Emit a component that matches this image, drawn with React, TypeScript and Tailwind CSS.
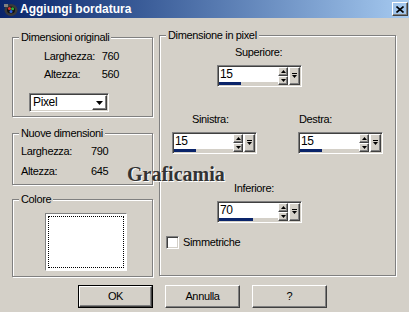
import * as React from "react";

const raised =
  "border border-t-white border-l-white border-r-[#404040] border-b-[#404040] shadow-[inset_-1px_-1px_0_#808080]";
const sunken =
  "border border-t-[#808080] border-l-[#808080] border-r-white border-b-white shadow-[inset_1px_1px_0_#404040,inset_-1px_-1px_0_#d4d0c8] p-[1px]";
const etched =
  "relative border border-[#808080] shadow-[inset_1px_1px_0_#fff,1px_1px_0_#fff]";

const Group: React.FC<
  React.PropsWithChildren & { title: string; className?: string }
> = ({ title, className, children }) => (
  <div className={`${etched} ${className ?? ""}`}>
    <span className="absolute left-[6px] top-[-7px] px-[2px] bg-[#d4d0c8] leading-[13px]">
      {title}
    </span>
    {children}
  </div>
);

const Arrow: React.FC<{ up?: boolean }> = ({ up }) => (
  <svg width="5" height="3" viewBox="0 0 5 3" className="block">
    <polygon points={up ? "2.5,0 5,3 0,3" : "0,0 5,0 2.5,3"} fill="#000" />
  </svg>
);

const Spin: React.FC<{ value: string; fill: number }> = ({ value, fill }) => (
  <div className={`${sunken} w-[85px] h-[22px] flex`}>
    <div className="w-[59px] flex flex-col bg-white">
      <div className="h-[15px] pl-[1px] text-[12px] leading-[15px] text-black">
        {value}
      </div>
      <div className="h-[3px] bg-[#d4d0c8]">
        <div className="h-full bg-[#0a246a]" style={{ width: fill }} />
      </div>
    </div>
    <div className="w-[10px] flex flex-col bg-white">
      <div className={`${raised} h-[9px] bg-[#d4d0c8] flex items-center justify-center`}>
        <Arrow up />
      </div>
      <div className={`${raised} h-[9px] bg-[#d4d0c8] flex items-center justify-center`}>
        <Arrow />
      </div>
    </div>
    <div className="w-[1px] bg-white" />
    <div className={`${raised} w-[11px] bg-[#d4d0c8] flex items-center justify-center`}>
      <svg width="5" height="6" viewBox="0 0 5 6" className="block">
        <rect x="0" y="0" width="5" height="1" fill="#000" />
        <polygon points="0,2 5,2 2.5,5" fill="#000" />
      </svg>
    </div>
  </div>
);

const Button: React.FC<React.PropsWithChildren & { primary?: boolean }> = ({
  primary,
  children,
}) =>
  primary ? (
    <div className="w-[75px] h-[23px] border border-black">
      <div className={`${raised} h-full flex items-center justify-center`}>
        {children}
      </div>
    </div>
  ) : (
    <div className={`${raised} w-[75px] h-[23px] flex items-center justify-center`}>
      {children}
    </div>
  );

export default function App() {
  return (
    <div
      className="relative w-[409px] h-[312px] overflow-hidden bg-[#d4d0c8] text-black text-[11px] tracking-[-0.35px] flex flex-col"
      style={{ fontFamily: '"Liberation Sans", Arial, sans-serif' }}
    >
      {/* title bar */}
      <div className="h-[18px] shrink-0 flex items-center bg-gradient-to-r from-[#0a246a] to-[#a6caf0] pl-[3px] pr-[1px]">
        <svg width="15" height="15" viewBox="0 0 15 15" className="block">
          <ellipse cx="8" cy="8" rx="6.5" ry="6" fill="#3a3a3a" />
          <ellipse cx="8" cy="8" rx="4" ry="3.6" fill="#111" />
          <circle cx="6.5" cy="6.5" r="1.6" fill="#e03030" />
          <circle cx="9.6" cy="6.8" r="1.5" fill="#30b040" />
          <circle cx="8" cy="9.6" r="1.5" fill="#3060e0" />
          <rect x="1" y="2" width="4" height="3" fill="#808080" />
        </svg>
        <span className="ml-[2px] text-white font-bold text-[12px] tracking-normal leading-[18px]">
          Aggiungi bordatura
        </span>
        <div className={`${raised} ml-auto w-[16px] h-[14px] flex items-center justify-center`}>
          <svg width="8" height="7" viewBox="0 0 8 7" className="block">
            <path d="M0.5 0.5 L7.5 6.5 M7.5 0.5 L0.5 6.5" stroke="#000" strokeWidth="1.6" />
          </svg>
        </div>
      </div>

      {/* body */}
      <div className="flex items-start gap-[6px] px-[12px] pt-[17px]">
        <div className="w-[141px] mt-[2px] flex flex-col">
          <Group title="Dimensioni originali" className="h-[80px]">
            <div className="pt-[12px] pl-[31px] flex leading-[13px]">
              <span className="w-[50px]">Larghezza:</span>
              <span className="w-[25px] text-right">760</span>
            </div>
            <div className="mt-[5px] pl-[31px] flex leading-[13px]">
              <span className="w-[50px]">Altezza:</span>
              <span className="w-[25px] text-right">560</span>
            </div>
            <div className={`${sunken} mt-[12px] ml-[16px] w-[80px] h-[19px] flex bg-white`}>
              <span className="flex-1 pl-[2px] text-[12px] leading-[15px]">Pixel</span>
              <div className={`${raised} w-[15px] h-[15px] flex items-center justify-center`}>
                <svg width="7" height="4" viewBox="0 0 7 4" className="block">
                  <polygon points="0,0 7,0 3.5,4" fill="#000" />
                </svg>
              </div>
            </div>
          </Group>

          <Group title="Nuove dimensioni" className="h-[52px] mt-[16px]">
            <div className="pt-[11px] pl-[8px] flex leading-[13px]">
              <span className="w-[70px]">Larghezza:</span>
              <span>790</span>
            </div>
            <div className="mt-[7px] pl-[8px] flex leading-[13px]">
              <span className="w-[70px]">Altezza:</span>
              <span>645</span>
            </div>
          </Group>

          <Group title="Colore" className="h-[78px] mt-[14px]">
            <div className="mt-[13px] ml-[32px] w-[82px] h-[58px] border border-t-[#808080] border-l-[#808080] border-r-white border-b-white bg-white p-[2px]">
              <div className="h-full border border-dotted border-black" />
            </div>
          </Group>
        </div>

        <Group title="Dimensione in pixel" className="w-[237px] h-[241px]">
          <div className="pt-[10px] pl-[75px] leading-[13px]">Superiore:</div>
          <div className="mt-[6px] ml-[57px]">
            <Spin value="15" fill={22} />
          </div>
          <div className="mt-[26px] flex leading-[13px]">
            <span className="pl-[32px] w-[139px]">Sinistra:</span>
            <span>Destra:</span>
          </div>
          <div className="mt-[6px] flex">
            <div className="ml-[12px] w-[126px]">
              <Spin value="15" fill={22} />
            </div>
            <Spin value="15" fill={22} />
          </div>
          <div className="mt-[28px] pl-[74px] leading-[13px]">Inferiore:</div>
          <div className="mt-[6px] ml-[57px]">
            <Spin value="70" fill={34} />
          </div>
          <div className="mt-[13px] ml-[6px] flex items-center gap-[4px]">
            <div className={`${sunken} w-[13px] h-[13px] bg-white`} />
            <span className="leading-[13px]">Simmetriche</span>
          </div>
        </Group>
      </div>

      {/* buttons */}
      <div className="mt-[8px] pl-[78px] flex gap-[12px]">
        <Button primary>OK</Button>
        <Button>Annulla</Button>
        <Button>?</Button>
      </div>

      {/* watermark */}
      <span
        className="absolute left-[127px] top-[164px] text-[20px] leading-[20px] font-bold tracking-normal text-[#333] [text-shadow:1px_1px_0_#fff]"
        style={{ fontFamily: '"Liberation Serif", "Times New Roman", serif' }}
      >
        Graficamia
      </span>
    </div>
  );
}
